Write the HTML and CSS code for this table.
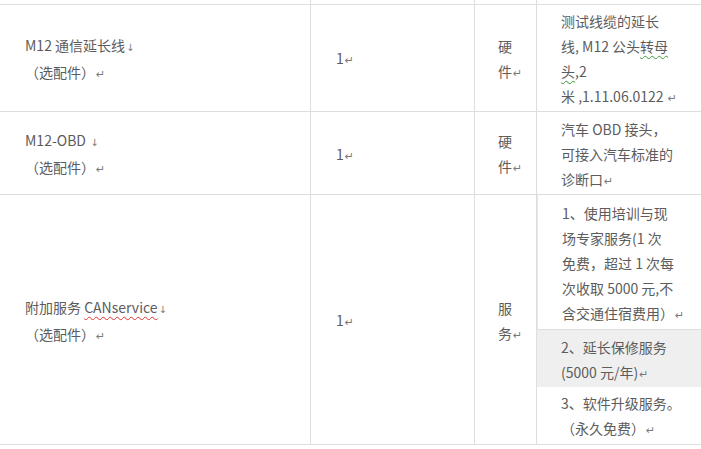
FILE: index.html
```html
<!DOCTYPE html>
<html lang="zh-CN">
<head>
<meta charset="utf-8">
<title>配件表</title>
<link rel="stylesheet" href="styles.css">
</head>
<body>
<div class="table">
  <div class="row r0">
    <div class="cell c1"></div><div class="cell c2"></div><div class="cell c3"></div><div class="cell c4"></div>
  </div>
  <div class="row r1">
    <div class="cell c1"><p>M12 通信延长线<span class="mk dn">↓</span><br>（选配件）<span class="mk">↵</span></p></div>
    <div class="cell c2"><p>1<span class="mk">↵</span></p></div>
    <div class="cell c3"><p>硬<br>件<span class="mk">↵</span></p></div>
    <div class="cell c4"><p>测试线缆的延长<br>线, M12 公头<span class="wg">转母</span><br><span class="wg">头</span>,2<br>米 ,1.11.06.0122 <span class="mk">↵</span></p></div>
  </div>
  <div class="row r2">
    <div class="cell c1"><p>M12-OBD <span class="mk dn">↓</span><br>（选配件）<span class="mk">↵</span></p></div>
    <div class="cell c2"><p>1<span class="mk">↵</span></p></div>
    <div class="cell c3"><p>硬<br>件<span class="mk">↵</span></p></div>
    <div class="cell c4"><p>汽车 OBD 接头，<br>可接入汽车标准的<br>诊断口<span class="mk">↵</span></p></div>
  </div>
  <div class="row r3">
    <div class="cell c1"><p>附加服务 <span class="wr">CANservice</span><span class="mk dn">↓</span><br>（选配件）<span class="mk">↵</span></p></div>
    <div class="cell c2"><p>1<span class="mk">↵</span></p></div>
    <div class="cell c3"><p>服<br>务<span class="mk">↵</span></p></div>
    <div class="cell c4 nest">
      <div class="sub s1"><p>1、使用培训与现<br>场专家服务(1 次<br>免费，超过 1 次每<br>次收取 5000 元,不<br>含交通住宿费用）<span class="mk">↵</span></p></div>
      <div class="sub s2"><p>2、延长保修服务<br>(5000 元/年)<span class="mk">↵</span></p></div>
      <div class="sub s3"><p>3、软件升级服务。<br>（永久免费）<span class="mk">↵</span></p></div>
    </div>
  </div>
</div>
</body>
</html>
```
FILE: styles.css
```css
html, body {
  margin: 0;
  padding: 0;
  background: #ffffff;
}
body {
  font-family: "Noto Sans CJK SC", "Noto Sans", sans-serif;
  font-size: 14px;
  color: #5c5c5c;
}
.table {
  position: relative;
  width: 701px;
}
.table::after {
  content: "";
  position: absolute;
  right: 0;
  bottom: -4px;
  width: 2px;
  height: 3px;
  border-left: 1px solid #bbb;
  border-top: 1px solid #bbb;
}
.row {
  display: grid;
  grid-template-columns: 311px 164px 62px 1fr;
}
.r0 { height: 4px; }
.r1 { height: 108px; }
.r2 { height: 83px; }
.r3 { height: 250px; }
.cell {
  box-sizing: border-box;
  border-right: 1px solid #dedede;
  border-bottom: 1px solid #dedede;
  display: flex;
  flex-direction: column;
  justify-content: center;
  padding: 4px 0 0 24px;
  white-space: nowrap;
}
.c1 { padding-left: 25px; }
.c2 { padding-left: 25px; }
.c3 { padding-left: 23px; }
.c4 { border-right: none; }
p {
  margin: 0;
  line-height: 25px;
}
.mk {
  font-family: "DejaVu Sans", sans-serif;
  font-size: 11px;
  color: #7a7a7a;
  margin-left: 1px;
}
.dn { font-size: 10px; }
.wg {
  text-decoration: underline wavy #3a9a3a;
  text-decoration-thickness: 1px;
  text-underline-offset: 3px;
}
.wr {
  text-decoration: underline wavy #e03030;
  text-decoration-thickness: 1px;
  text-underline-offset: 3px;
}
.nest {
  padding: 0;
  justify-content: flex-start;
}
.sub {
  box-sizing: border-box;
  display: flex;
  flex-direction: column;
  justify-content: center;
  padding: 4px 0 0 24px;
}
.s1 {
  height: 135px;
  border-bottom: 1px solid #dedede;
  border-left: 1px solid #e6e6e6;
}
.s2 {
  height: 57px;
  background: #efefef;
}
.s3 {
  height: 56px;
}
```
